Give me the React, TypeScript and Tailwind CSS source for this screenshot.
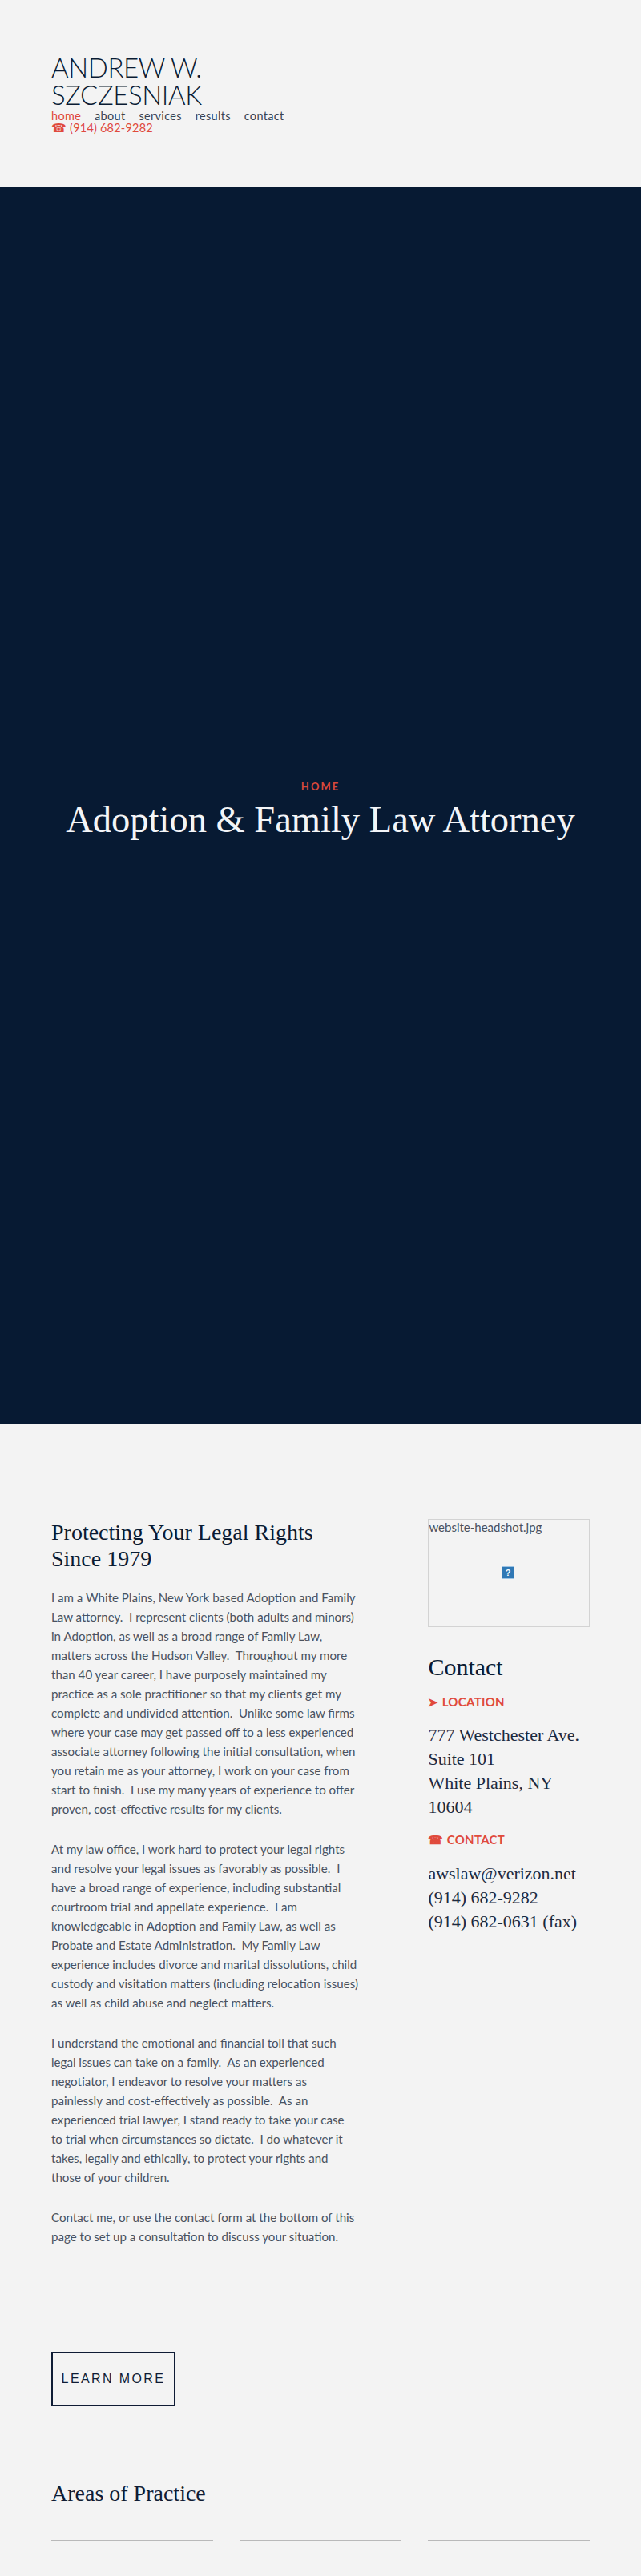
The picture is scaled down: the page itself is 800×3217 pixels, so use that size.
import React from 'react';

const sans = 'font-["Lato","Noto_Sans",sans-serif]';
const serif = 'font-["Liberation_Serif",serif]';

const paragraphs: string[][] = [
  [
    'I am a White Plains, New York based Adoption and Family',
    'Law attorney.\u00a0 I represent clients (both adults and minors)',
    'in Adoption, as well as a broad range of Family Law,',
    'matters across the Hudson Valley.\u00a0 Throughout my more',
    'than 40 year career, I have purposely maintained my',
    'practice as a sole practitioner so that my clients get my',
    'complete and undivided attention.\u00a0 Unlike some law firms',
    'where your case may get passed off to a less experienced',
    'associate attorney following the initial consultation, when',
    'you retain me as your attorney, I work on your case from',
    'start to finish.\u00a0 I use my many years of experience to offer',
    'proven, cost-effective results for my clients.',
  ],
  [
    'At my law office, I work hard to protect your legal rights',
    'and resolve your legal issues as favorably as possible.\u00a0 I',
    'have a broad range of experience, including substantial',
    'courtroom trial and appellate experience.\u00a0 I am',
    'knowledgeable in Adoption and Family Law, as well as',
    'Probate and Estate Administration.\u00a0 My Family Law',
    'experience includes divorce and marital dissolutions, child',
    'custody and visitation matters (including relocation issues)',
    'as well as child abuse and neglect matters.',
  ],
  [
    'I understand the emotional and financial toll that such',
    'legal issues can take on a family.\u00a0 As an experienced',
    'negotiator, I endeavor to resolve your matters as',
    'painlessly and cost-effectively as possible.\u00a0 As an',
    'experienced trial lawyer, I stand ready to take your case',
    'to trial when circumstances so dictate.\u00a0 I do whatever it',
    'takes, legally and ethically, to protect your rights and',
    'those of your children.',
  ],
  [
    'Contact me, or use the contact form at the bottom of this',
    'page to set up a consultation to discuss your situation.',
  ],
];

const navItems = ['home', 'about', 'services', 'results', 'contact'];

function BrokenImageIcon() {
  return (
    <svg width="16" height="16" viewBox="0 0 16 16">
      <rect x="0.5" y="0.5" width="15" height="15" fill="#2f78b5" stroke="#9cc3e4" />
      <text x="8" y="12" textAnchor="middle" fontSize="11" fontWeight="700" fill="#fff" fontFamily="Liberation Sans">
        ?
      </text>
    </svg>
  );
}

export default function App() {
  return (
    <div className={`min-h-[3217px] bg-[#f3f3f3] ${sans}`}>
      <header className="h-[234px] px-16 pt-[67px]">
        <h1 className="w-[260px] text-[33px] leading-[34px] tracking-[-0.4px] font-light text-[#0a1b33]">
          ANDREW W.
          <br />
          SZCZESNIAK
        </h1>
        <nav className="flex gap-[17px] mt-[2px] text-[14.5px] leading-[15px] tracking-[0.3px] text-[#3a4454]">
          {navItems.map((item, i) => (
            <span key={item} className={i === 0 ? 'text-[#e04a3c]' : ''}>
              {item}
            </span>
          ))}
        </nav>
        <div className="text-[14.5px] leading-[15px] tracking-[0.2px] text-[#e04a3c]">☎ (914) 682-9282</div>
      </header>

      <section className="h-[1544px] pt-[16px] bg-[#071a33] flex flex-col items-center justify-center text-center">
        <div className="text-[13px] leading-[16px] font-bold tracking-[2px] text-[#d9483b]">HOME</div>
        <h2 className={`${serif} mt-[4px] text-[46.5px] leading-[60px] text-[#f3f5f8]`}>
          Adoption &amp; Family Law Attorney
        </h2>
      </section>

      <main className="px-16 pt-[119px]">
        <div className="grid grid-cols-3 gap-[33.6px]">
          <div className="col-span-2">
            <h2 className={`${serif} text-[28px] leading-[33px] text-[#0a1b33]`}>
              Protecting Your Legal Rights
              <br />
              Since 1979
            </h2>
            <div className="mt-[20px] flex flex-col gap-[26px] text-[15.1px] leading-[24px] text-[#4a5260]">
              {paragraphs.map((lines, i) => (
                <p key={i}>
                  {lines.map((line, j) => (
                    <span key={j} className="block whitespace-nowrap">
                      {line}
                    </span>
                  ))}
                </p>
              ))}
            </div>
          </div>

          <aside>
            <div className="h-[135px] border border-[#d3d3d3] relative text-[15px] leading-[18px] text-[#4a5260]">
              website-headshot.jpg
              <div className="absolute left-[91px] top-[58px]">
                <BrokenImageIcon />
              </div>
            </div>
            <h2 className={`${serif} mt-[32px] text-[30px] leading-[36px] text-[#0a1b33]`}>Contact</h2>
            <div className="mt-[15px] text-[15px] leading-[20px] font-bold tracking-[0.3px] text-[#e04a3c]">➤ LOCATION</div>
            <div className={`${serif} mt-[17px] text-[22px] leading-[30px] text-[#1c2a3f]`}>
              777 Westchester Ave.
              <br />
              Suite 101
              <br />
              White Plains, NY
              <br />
              10604
            </div>
            <div className="mt-[15px] text-[15px] leading-[20px] font-bold tracking-[0.3px] text-[#e04a3c]">☎ CONTACT</div>
            <div className={`${serif} mt-[18px] text-[22px] leading-[30px] text-[#1c2a3f]`}>
              awslaw@verizon.net
              <br />
              (914) 682-9282
              <br />
              (914) 682-0631 (fax)
            </div>
          </aside>
        </div>

        <button className='mt-[132px] block w-[155px] h-[68px] border-2 border-[#0f1c35] font-["Liberation_Sans_Narrow","Liberation_Sans",sans-serif] text-[16px] tracking-[2.4px] text-[#0f1c35]'>
          LEARN MORE
        </button>

        <h2 className={`${serif} mt-[92px] text-[28px] leading-[34px] text-[#0f1c35]`}>Areas of Practice</h2>

        <div className="mt-[41px] grid grid-cols-3 gap-[33.6px]">
          <div className="border-t border-[#b9b9b9]" />
          <div className="border-t border-[#b9b9b9]" />
          <div className="border-t border-[#b9b9b9]" />
        </div>
      </main>
    </div>
  );
}
